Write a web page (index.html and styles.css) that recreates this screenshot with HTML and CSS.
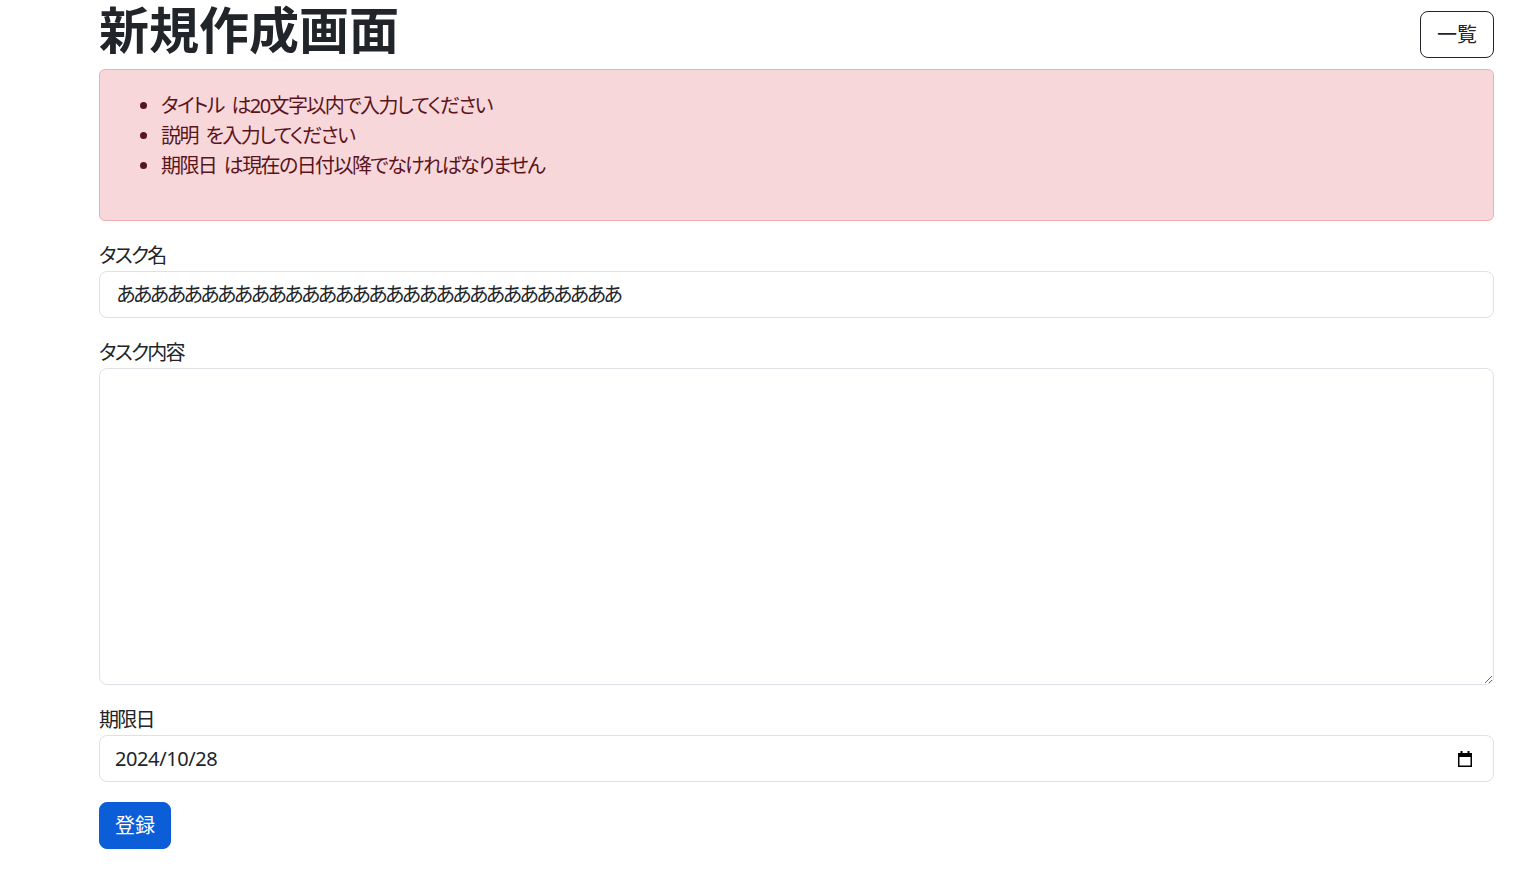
FILE: index.html
```html
<!DOCTYPE html>
<html lang="ja">

<head>
    <meta charset="UTF-8">
    <meta name="viewport" content="width=device-width, initial-scale=1.0">
    <title>新規作成画面</title>
    <link rel="stylesheet" href="styles.css">
</head>

<body>
    <div class="page">
        <!-- Header -->
        <div class="page-header">
            <h1>新規作成画面</h1>
            <a class="btn btn-outline" href="#">一覧</a>
        </div>

        <!-- Validation errors -->
        <div class="alert alert-danger">
            <ul>
                <li>タイトル は20文字以内で入力してください</li>
                <li>説明 を入力してください</li>
                <li>期限日 は現在の日付以降でなければなりません</li>
            </ul>
        </div>

        <!-- Task form -->
        <form class="task-form">
            <div class="form-group">
                <label for="title">タスク名</label>
                <input type="text" id="title" class="form-control kana-input" value="ああああああああああああああああああああああああああああああ">
            </div>
            <div class="form-group">
                <label for="description">タスク内容</label>
                <textarea id="description" class="form-control form-textarea"></textarea>
            </div>
            <div class="form-group">
                <label for="dueDate">期限日</label>
                <div class="form-control date-field">
                    <input type="text" id="dueDate" value="2024/10/28">
                    <svg width="16" height="18" viewBox="0 0 16 18">
                        <rect x="1.75" y="3.75" width="12.5" height="12.5" fill="none" stroke="#000" stroke-width="1.5"/>
                        <rect x="1" y="3" width="14" height="4" fill="#000"/>
                        <rect x="3.5" y="1" width="2" height="3" fill="#000"/>
                        <rect x="10.5" y="1" width="2" height="3" fill="#000"/>
                    </svg>
                </div>
            </div>
            <button type="submit" class="btn btn-primary">登録</button>
        </form>
    </div>
</body>

</html>
```

FILE: styles.css
```css
/* Base styles */
body {
    margin: 0;
    font-family: "Noto Sans", "Noto Sans CJK JP", sans-serif;
    font-feature-settings: "palt";
    color: #212529;
    background: #fff;
}

.page {
    padding: 0 36px 0 99px;
}

/* Header */
.page-header {
    display: flex;
    justify-content: space-between;
    align-items: flex-start;
    height: 69px;
}

.page-header h1 {
    margin: 0;
    font-size: 50px;
    font-weight: 700;
    line-height: 60px;
    font-feature-settings: normal;
}

/* Buttons */
.btn {
    display: inline-block;
    padding: 8px 16px;
    font-family: inherit;
    font-size: 20px;
    line-height: 29px;
    border-radius: 8px;
    text-decoration: none;
    cursor: pointer;
}

.btn-outline {
    margin-top: 11px;
    color: #212529;
    border: 1px solid #212529;
    background: #fff;
}

.btn-primary {
    margin-top: 20px;
    padding: 8px 15px;
    color: #fff;
    background: #0b5ed7;
    border: 1px solid #0b5ed7;
}

/* Alert */
.alert {
    padding: 16px;
    border: 1px solid #f1aeb5;
    border-radius: 6px;
    background-color: #f8d7da;
    color: #58151c;
}

.alert ul {
    margin: 5px 0 23px;
    padding-left: 45px;
    font-size: 20px;
    line-height: 30px;
    letter-spacing: -1.6px;
    word-spacing: 4px;
}

/* Form */
.form-group {
    margin-top: 20px;
}

.form-group label {
    display: block;
    font-size: 20px;
    line-height: 30px;
    letter-spacing: -1.7px;
}

.form-control {
    display: block;
    box-sizing: border-box;
    width: 100%;
    padding: 8px 16px;
    font-family: inherit;
    font-size: 20px;
    line-height: 29px;
    color: #212529;
    border: 1px solid #dee2e6;
    border-radius: 8px;
    background: #fff;
}

.kana-input {
    letter-spacing: -3.2px;
}

.form-textarea {
    height: 317px;
    resize: vertical;
}

.date-field {
    display: flex;
    align-items: center;
    padding-left: 15px;
    padding-right: 20px;
}

.date-field input {
    flex: 1;
    padding: 0;
    border: 0;
    outline: none;
    font-family: inherit;
    font-size: 20px;
    line-height: 29px;
    letter-spacing: -0.4px;
    color: #212529;
    background: transparent;
}
```
